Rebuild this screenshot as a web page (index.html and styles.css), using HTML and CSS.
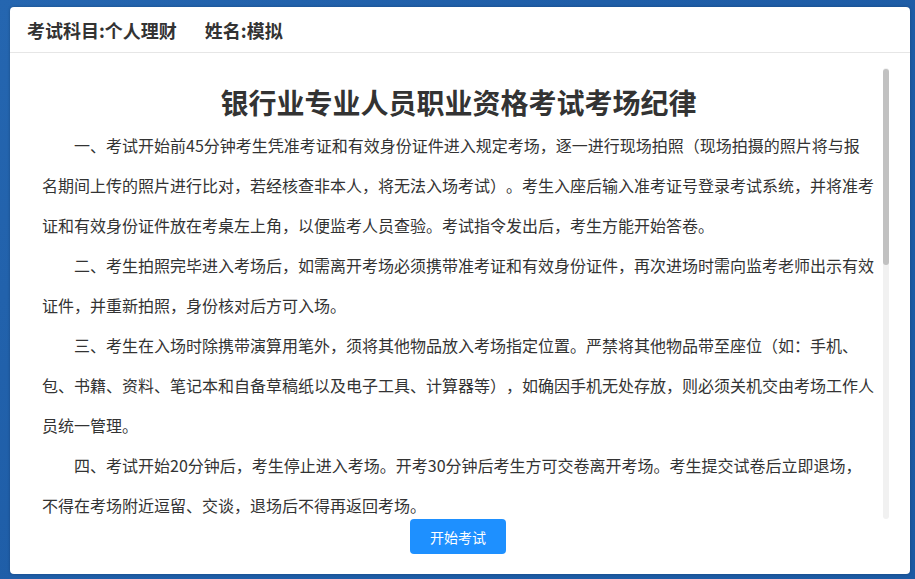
FILE: index.html
```html
<!DOCTYPE html>
<html lang="zh-CN">
<head>
<meta charset="utf-8">
<title>考场纪律</title>
<link rel="stylesheet" href="styles.css">
</head>
<body>
<div class="card">
  <div class="header">
    <span class="info">考试科目:个人理财</span>
    <span class="info">姓名:模拟</span>
  </div>
  <div class="body">
    <div class="scroll">
      <h1 class="title">银行业专业人员职业资格考试考场纪律</h1>
      <p class="para">一、考试开始前45分钟考生凭准考证和有效身份证件进入规定考场，逐一进行现场拍照（现场拍摄的照片将与报名期间上传的照片进行比对，若经核查非本人，将无法入场考试）。考生入座后输入准考证号登录考试系统，并将准考证和有效身份证件放在考桌左上角，以便监考人员查验。考试指令发出后，考生方能开始答卷。</p>
      <p class="para">二、考生拍照完毕进入考场后，如需离开考场必须携带准考证和有效身份证件，再次进场时需向监考老师出示有效证件，并重新拍照，身份核对后方可入场。</p>
      <p class="para">三、考生在入场时除携带演算用笔外，须将其他物品放入考场指定位置。严禁将其他物品带至座位（如：手机、包、书籍、资料、笔记本和自备草稿纸以及电子工具、计算器等），如确因手机无处存放，则必须关机交由考场工作人员统一管理。</p>
      <p class="para">四、考试开始20分钟后，考生停止进入考场。开考30分钟后考生方可交卷离开考场。考生提交试卷后立即退场，不得在考场附近逗留、交谈，退场后不得再返回考场。</p>
    </div>
    <div class="track"><div class="thumb"></div></div>
  </div>
  <div class="footer">
    <button class="start">开始考试</button>
  </div>
</div>
</body>
</html>
```

FILE: styles.css
```css
html, body {
  margin: 0;
  padding: 0;
  height: 100%;
}
body {
  background: linear-gradient(135deg, #2566b0 0%, #1f5ea8 40%, #1c5aa3 100%);
  font-family: "Noto Sans CJK SC", "Noto Sans", sans-serif;
  color: #333;
  box-sizing: border-box;
  padding: 7px 5px 5px 10px;
  overflow: hidden;
  text-spacing-trim: space-all;
}
.card {
  background: #fff;
  border-radius: 4px;
  height: 567px;
  width: 900px;
  display: flex;
  flex-direction: column;
  box-shadow: 0 0 3px rgba(0, 0, 0, 0.25);
}
.header {
  height: 46px;
  border-bottom: 1px solid #e6e6e6;
  display: flex;
  align-items: center;
  gap: 28px;
  padding-left: 17px;
  padding-top: 1px;
  box-sizing: border-box;
  flex-shrink: 0;
}
.info {
  font-size: 18px;
  font-weight: 700;
  color: #333;
  line-height: 24px;
}
.body {
  margin-top: 15px;
  height: 451px;
  display: flex;
  gap: 8px;
  flex-shrink: 0;
}
.scroll {
  width: 833px;
  padding-left: 32px;
  overflow: hidden;
  flex-shrink: 0;
}
.track {
  width: 6px;
  height: 451px;
  background: #f1f1f1;
  border-radius: 3px;
  flex-shrink: 0;
}
.thumb {
  margin-top: 1px;
  height: 196px;
  background: #c1c1c1;
  border-radius: 3px;
}
.title {
  margin: 14px 0 3px;
  font-size: 28px;
  font-weight: 700;
  line-height: 40px;
  text-align: center;
  color: #333;
}
.para {
  margin: 0;
  font-size: 16px;
  line-height: 40px;
  text-indent: 2em;
  color: #333;
}
.footer {
  display: flex;
  justify-content: center;
}
.start {
  width: 96px;
  height: 35px;
  border: none;
  border-radius: 4px;
  background: #1e90ff;
  color: #fff;
  font-family: "Noto Sans CJK SC", sans-serif;
  font-size: 14px;
  cursor: pointer;
  padding: 0;
  margin-right: 4px;
}
```
